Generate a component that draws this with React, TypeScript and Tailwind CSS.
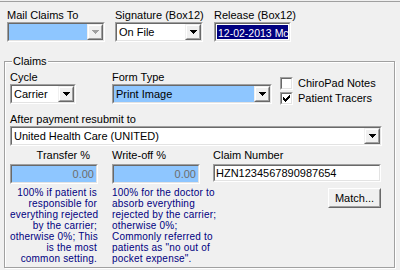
const Arrow = ({ color = '#000' }: { color?: string }) => (
  <svg width="7" height="4" viewBox="0 0 7 4" shapeRendering="crispEdges">
    <path d="M0 0H7V1H6V2H5V3H4V4H3V3H2V2H1V1H0Z" fill={color} />
  </svg>
)

const Sunken = ({ className, inner, children }: any) => (
  <div className={`border border-t-[#a0a0a0] border-l-[#a0a0a0] border-r-white border-b-white ${className}`}>
    <div className={`h-full border border-t-[#696969] border-l-[#696969] border-r-[#e3e3e3] border-b-[#e3e3e3] ${inner}`}>
      {children}
    </div>
  </div>
)

const Combo = ({ w, value, fill = 'bg-white', disabled }: any) => (
  <Sunken className={`${w} h-[20px]`} inner="flex">
    <div className={`flex-1 ${fill} pl-[2px] leading-[16px] whitespace-nowrap overflow-hidden`}>{value}</div>
    <div className="w-[16px] h-full border border-t-[#f0f0f0] border-l-[#f0f0f0] border-r-[#696969] border-b-[#696969] bg-[#f0f0f0]">
      <div className="h-full flex items-center justify-center border border-t-white border-l-white border-r-[#a0a0a0] border-b-[#a0a0a0]">
        <Arrow color={disabled ? '#a0a0a0' : '#000'} />
      </div>
    </div>
  </Sunken>
)

const Check = ({ checked, label }: any) => (
  <div className="flex items-center h-[15px]">
    <Sunken className="w-[13px] h-[13px]" inner="bg-white flex items-center justify-center">
      {checked && (
        <svg width="7" height="7" viewBox="0 0 7 7" shapeRendering="crispEdges">
          <path d="M6 0H7V3H6V4H5V5H4V6H3V7H2V6H1V5H0V2H1V3H2V4H3V3H4V2H5V1H6Z" fill="#000" />
        </svg>
      )}
    </Sunken>
    <span className="ml-[5px]">{label}</span>
  </div>
)

const transferHelp = [
  '100% if patient is',
  'responsible for',
  'everything rejected',
  'by the carrier;',
  'otherwise 0%; This',
  'is the most',
  'common setting.',
]

const writeoffHelp = [
  '100% for the doctor to',
  'absorb everything',
  'rejected by the carrier;',
  'otherwise 0%;',
  'Commonly referred to',
  'patients as "no out of',
  'pocket expense".',
]

const Help = ({ lines, right }: any) => (
  <div className={`mt-[3px] text-[10px] tracking-[0.2px] leading-[11px] text-[#000080] whitespace-nowrap ${right ? 'text-right' : ''}`}>
    {lines.map((l: string) => (
      <div key={l}>{l}</div>
    ))}
  </div>
)

export default function App() {
  return (
    <div className="w-[400px] h-[270px] bg-[#f0f0f0] overflow-hidden font-['Liberation_Sans',sans-serif] text-[11px] leading-[13px] text-black">
      <div className="mt-px border-t border-[#a0a0a0]">
        <div className="flex pt-[7px] pl-[7px]">
          <div className="w-[108px]">
            <div>Mail Claims To</div>
            <Combo w="w-[98px]" value="" fill="bg-[#8ec6ff]" disabled />
          </div>
          <div className="w-[99px]">
            <div>Signature (Box12)</div>
            <Combo w="w-[88px]" value="On File" />
          </div>
          <div>
            <div>Release (Box12)</div>
            <Sunken className="w-[77px] h-[20px]" inner="bg-white p-px">
              <div className="h-full bg-[#000080] text-white pl-px text-[10.5px] leading-[16px] whitespace-nowrap overflow-hidden">
                12-02-2013 Mc
              </div>
            </Sunken>
          </div>
        </div>

        <fieldset className="ml-[4px] mt-[13px] w-[391px] h-[213px] border border-[#a0a0a0] shadow-[1px_1px_0_#fff,inset_1px_1px_0_#fff]">
          <legend className="ml-[7px] px-[1px] bg-[#f0f0f0]">Claims</legend>
          <div className="pl-[5px] pt-[3px]">
            <div className="flex">
              <div className="w-[102px]">
                <div>Cycle</div>
                <Combo w="w-[66px]" value="Carrier" />
              </div>
              <div className="w-[168px]">
                <div>Form Type</div>
                <Combo w="w-[160px]" value="Print Image" fill="bg-[#8ec6ff]" />
              </div>
              <div className="pt-[5px]">
                <Check label="ChiroPad Notes" />
                <Check label="Patient Tracers" checked />
              </div>
            </div>

            <div className="mt-[7px]">After payment resubmit to</div>
            <Combo w="w-[372px]" value="United Health Care (UNITED)" />

            <div className="flex mt-[3px]">
              <div className="w-[102px]">
                <div className="w-[88px] text-right pr-[8px]">Transfer %</div>
                <Sunken className="w-[88px] h-[20px] mt-[2px]" inner="bg-[#8ec6ff] text-right pr-[2px] leading-[16px] text-[#6d6d6d]">
                  0.00
                </Sunken>
                <div className="w-[87px]">
                  <Help lines={transferHelp} right />
                </div>
              </div>
              <div className="w-[101px]">
                <div>Write-off %</div>
                <Sunken className="w-[88px] h-[20px] mt-[2px]" inner="bg-[#8ec6ff] text-right pr-[2px] leading-[16px] text-[#6d6d6d]">
                  0.00
                </Sunken>
                <Help lines={writeoffHelp} />
              </div>
              <div className="w-[168px]">
                <div>Claim Number</div>
                <Sunken className="w-[168px] h-[18px] mt-[2px]" inner="bg-white pl-[1px] leading-[14px]">
                  HZN1234567890987654
                </Sunken>
                <div className="flex justify-end mt-[6px]">
                  <div className="w-[53px] h-[20px] border border-t-white border-l-white border-r-[#696969] border-b-[#696969]">
                    <div className="h-full flex items-center justify-center border border-t-[#f0f0f0] border-l-[#f0f0f0] border-r-[#a0a0a0] border-b-[#a0a0a0]">
                      Match...
                    </div>
                  </div>
                </div>
              </div>
            </div>
          </div>
        </fieldset>
      </div>
    </div>
  )
}
